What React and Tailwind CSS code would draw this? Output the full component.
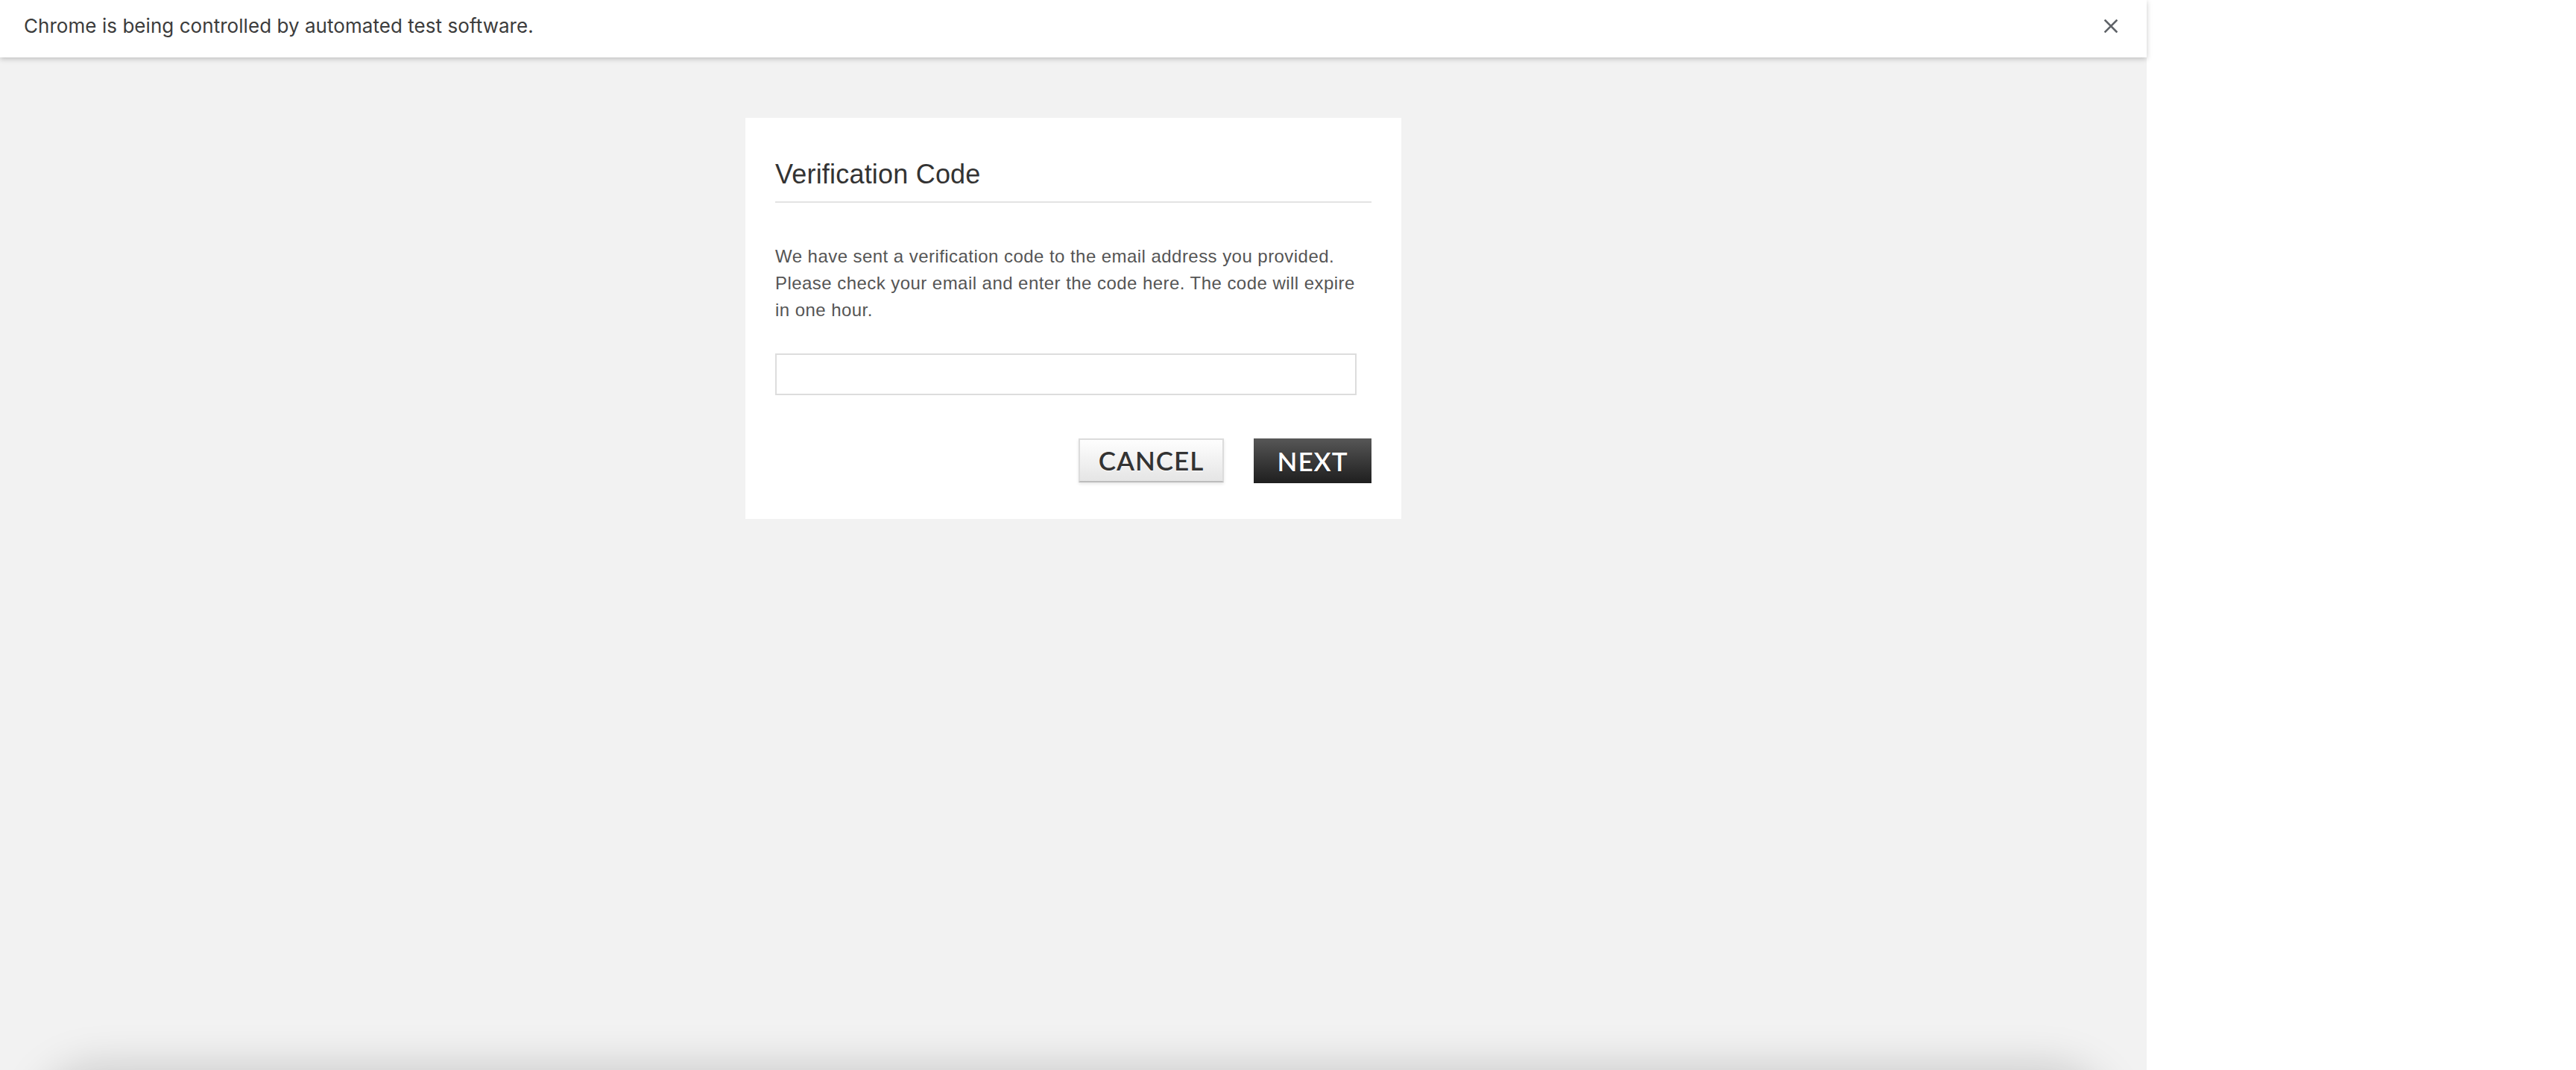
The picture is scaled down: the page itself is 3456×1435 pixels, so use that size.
import React from 'react';

function CloseIcon() {
    return (
        <svg width="18" height="18" viewBox="0 0 18 18" fill="none">
            <path d="M1.5 1.5 L16.5 16.5 M16.5 1.5 L1.5 16.5" stroke="#5f6368" strokeWidth="2.6" strokeLinecap="square" />
        </svg>
    );
}

export default function App() {
    return (
        <div className="w-[3456px] h-[1435px] bg-white flex overflow-hidden">
            <div className="w-[2880px] h-full flex flex-col">
                {/* automation infobar */}
                <div className="relative z-10 h-[77px] shrink-0 bg-white flex items-center justify-between pl-[32px] pr-[39px] pb-[8px] shadow-[0_2px_7px_rgba(0,0,0,0.22)]">
                    <span className="text-[26px] text-[#3c3c3c] tracking-[0.05px] font-['Inter',sans-serif]">
                        Chrome is being controlled by automated test software.
                    </span>
                    <CloseIcon />
                </div>

                <div className="relative flex-1 bg-[#f2f2f2] overflow-hidden flex justify-center items-start pt-[81px]">
                    <div className="w-[880px] bg-white px-[40px] pt-[54px] pb-[48px] font-['Liberation_Sans',Arial,sans-serif]">
                        <h2 className="text-[36px] leading-[44px] tracking-[0.2px] text-[#333333] pb-[14px] border-b-2 border-[#e3e3e3]">
                            Verification Code
                        </h2>
                        <p className="mt-[54px] w-[780px] text-[24px] leading-[36px] tracking-[0.45px] text-[#555555]">
                            We have sent a verification code to the email address you provided. Please check your email and enter the code here. The code will expire in one hour.
                        </p>
                        <input
                            type="text"
                            className="block mt-[40px] w-[780px] h-[56px] border-2 border-[#dddddd] bg-white outline-none"
                        />
                        <div className="mt-[58px] flex justify-end items-start gap-[40px] font-['Lato',sans-serif]">
                            <button className="w-[195px] h-[59px] border-2 border-[#dcdcdc] border-b-[#bcbcbc] bg-gradient-to-b from-[#fefefe] to-[#e5e5e5] shadow-[0_2px_4px_rgba(0,0,0,0.1)] text-[35px] font-semibold tracking-[1px] text-[#333333] [text-shadow:0_1px_1px_#ffffff] flex items-center justify-center">
                                CANCEL
                            </button>
                            <button className="w-[158px] h-[60px] bg-gradient-to-b from-[#575757] to-[#1f1f1f] text-[35px] font-semibold tracking-[1px] text-white [text-shadow:0_1px_1px_rgba(0,0,0,0.4)] flex items-center justify-center">
                                NEXT
                            </button>
                        </div>
                    </div>

                    {/* soft shadow rising from below the window edge */}
                    <div className="absolute left-[70px] right-[70px] top-[1375px] h-[120px] rounded-[60px] bg-[#d8d8d8] shadow-[0_0_60px_20px_rgba(0,0,0,0.18)]" />
                </div>
            </div>
        </div>
    );
}
